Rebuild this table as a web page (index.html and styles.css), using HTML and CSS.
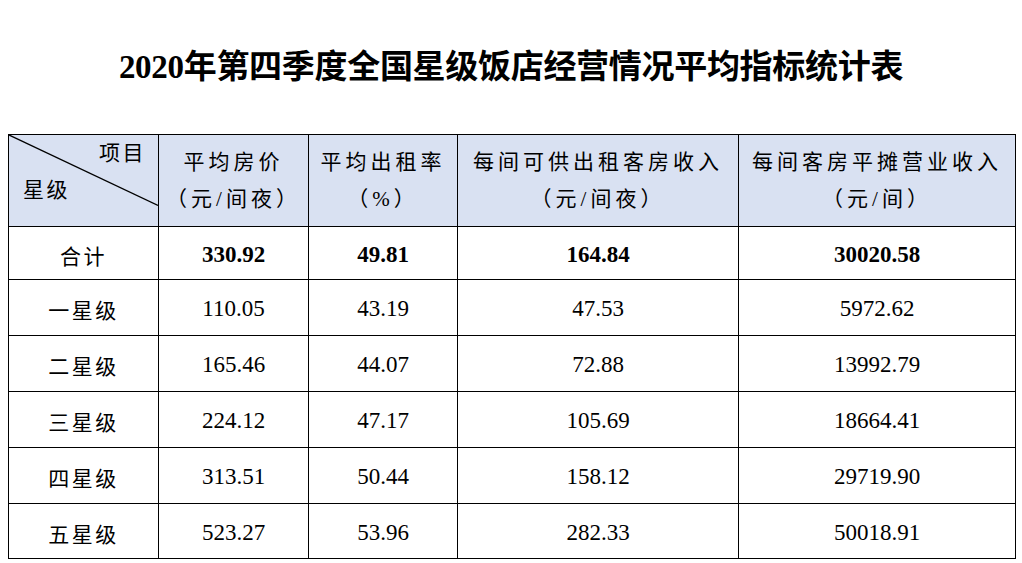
FILE: index.html
```html
<!DOCTYPE html>
<html lang="zh-CN">
<head>
<meta charset="utf-8">
<title>2020年第四季度全国星级饭店经营情况平均指标统计表</title>
<link rel="stylesheet" href="styles.css">
</head>
<body>
<main class="page">
  <h1 class="title">2020年第四季度全国星级饭店经营情况平均指标统计表</h1>
  <table class="stats">
    <colgroup>
      <col class="c1"><col class="c2"><col class="c3"><col class="c4"><col class="c5">
    </colgroup>
    <thead>
      <tr class="head">
        <th class="corner">
          <svg class="diag" viewBox="0 0 150 93" preserveAspectRatio="none"><line x1="0" y1="0" x2="150" y2="72" stroke="#000" stroke-width="1.4"/></svg>
          <div class="corner-top">项目</div>
          <div class="corner-bottom">星级</div>
        </th>
        <th><div>平均房价</div><div>（元/间夜）</div></th>
        <th><div>平均出租率</div><div>（%）</div></th>
        <th><div>每间可供出租客房收入</div><div>（元/间夜）</div></th>
        <th><div>每间客房平摊营业收入</div><div>（元/间）</div></th>
      </tr>
    </thead>
    <tbody>
      <tr class="total">
        <td class="label">合计</td><td class="num">330.92</td><td class="num">49.81</td><td class="num">164.84</td><td class="num">30020.58</td>
      </tr>
      <tr>
        <td class="label">一星级</td><td class="num">110.05</td><td class="num">43.19</td><td class="num">47.53</td><td class="num">5972.62</td>
      </tr>
      <tr>
        <td class="label">二星级</td><td class="num">165.46</td><td class="num">44.07</td><td class="num">72.88</td><td class="num">13992.79</td>
      </tr>
      <tr>
        <td class="label">三星级</td><td class="num">224.12</td><td class="num">47.17</td><td class="num">105.69</td><td class="num">18664.41</td>
      </tr>
      <tr>
        <td class="label">四星级</td><td class="num">313.51</td><td class="num">50.44</td><td class="num">158.12</td><td class="num">29719.90</td>
      </tr>
      <tr class="last">
        <td class="label">五星级</td><td class="num">523.27</td><td class="num">53.96</td><td class="num">282.33</td><td class="num">50018.91</td>
      </tr>
    </tbody>
  </table>
</main>
</body>
</html>
```

FILE: styles.css
```css
html, body {
  margin: 0;
  padding: 0;
  background: #ffffff;
}

body {
  width: 1022px;
  height: 563px;
  overflow: hidden;
  font-family: "Liberation Serif", "Noto Sans CJK SC", serif;
  color: #000;
}

.page {
  padding: 47px 0 0 8px;
}

.title {
  margin: 0 0 47px -8px;
  font-size: 33px;
  line-height: 40px;
  font-weight: bold;
  text-align: center;
  letter-spacing: -0.3px;
}

.stats {
  border-collapse: collapse;
  table-layout: fixed;
  width: 1007px;
}

.c1 { width: 150px; }
.c2 { width: 150px; }
.c3 { width: 149px; }
.c4 { width: 281px; }
.c5 { width: 277px; }

.stats th,
.stats td {
  border: 1.5px solid #000;
  padding: 0;
  text-align: center;
  vertical-align: middle;
}

.head th {
  height: 91px;
  background: #d9e1f2;
  font-weight: normal;
  font-size: 21px;
  line-height: 37px;
  letter-spacing: 4px;
}

.corner {
  position: relative;
  vertical-align: top !important;
}

.diag {
  position: absolute;
  left: 0;
  top: 0;
  width: 100%;
  height: 100%;
}

.corner-top {
  text-align: right;
  padding-right: 12px;
  letter-spacing: 2.5px;
}

.corner-bottom {
  text-align: left;
  padding-left: 14px;
  letter-spacing: 2.5px;
}

.stats td {
  height: 52px;
  font-size: 23px;
  padding-top: 3px;
}

.stats .total td {
  height: 49px;
  font-weight: bold;
}

.stats .total td.label {
  font-weight: normal;
}

.stats td.label {
  font-size: 21px;
  letter-spacing: 2.5px;
}

.stats .last td {
  height: 51px;
}
```
